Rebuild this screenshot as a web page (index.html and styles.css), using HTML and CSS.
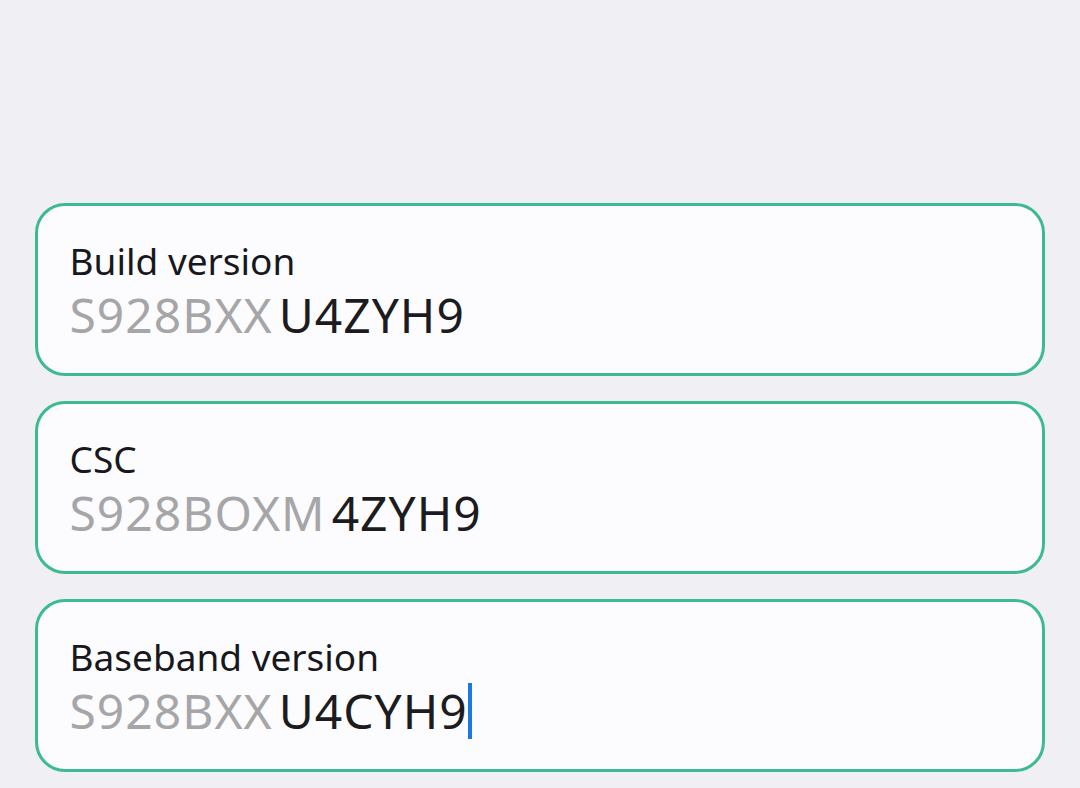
FILE: index.html
```html
<!DOCTYPE html>
<html lang="en">
<head>
  <meta charset="UTF-8" />
  <meta name="viewport" content="width=device-width, initial-scale=1.0">
  <title>Software information</title>
  <link rel="stylesheet" href="styles.css">
</head>
<body>

  <main class="list">
    <div class="field">
      <div class="label">Build version</div>
      <div class="value"><span class="prefix">S928BXX</span><span class="suffix">U4ZYH9</span></div>
    </div>
    <div class="field">
      <div class="label">CSC</div>
      <div class="value"><span class="prefix">S928BOXM</span><span class="suffix">4ZYH9</span></div>
    </div>
    <div class="field">
      <div class="label">Baseband version</div>
      <div class="value"><span class="prefix">S928BXX</span><span class="suffix">U4CYH9</span><span class="caret"></span></div>
    </div>
  </main>

</body>
</html>
```

FILE: styles.css
```css
* {
  margin: 0;
  padding: 0;
  box-sizing: border-box;
}

html, body {
  height: 100%;
  background: #f0f0f4;
  font-family: "Noto Sans", "Open Sans", sans-serif;
  color: #1c1c20;
}

.list {
  display: flex;
  flex-direction: column;
  gap: 25px;
  padding: 203px 35px 0 35px;
}

.field {
  height: 173px;
  background: #fcfcff;
  border: 3px solid #3db993;
  border-radius: 30px;
  padding: 29.5px 31.5px 0 31.5px;
  display: flex;
  flex-direction: column;
}

.label {
  font-size: 37px;
  line-height: 50px;
  color: #18181c;
}

.value {
  display: flex;
  align-items: center;
  font-size: 48px;
  line-height: 58px;
  letter-spacing: 1px;
  gap: 6px;
}

.prefix {
  color: #a6a6a8;
}

.suffix {
  color: #1c1c20;
}

.caret {
  width: 4px;
  height: 56px;
  background: #1a7ae0;
  margin-left: -6px;
}
```
